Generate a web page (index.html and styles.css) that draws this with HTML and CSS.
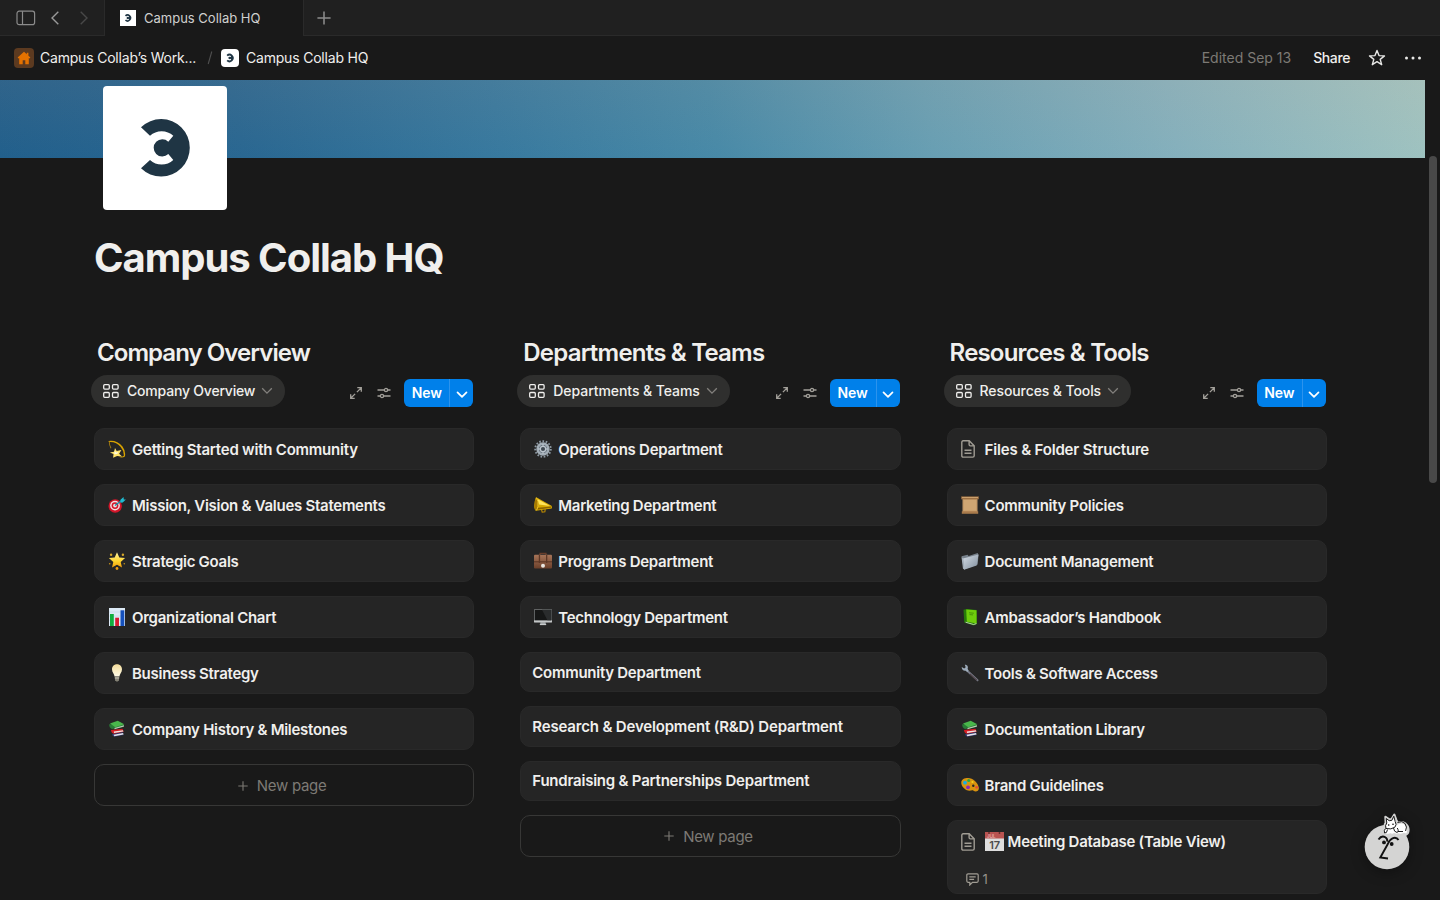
FILE: index.html
```html
<!DOCTYPE html>
<html lang="en">
<head>
<meta charset="utf-8">
<title>Campus Collab HQ</title>
<link rel="stylesheet" href="styles.css">
</head>
<body>
<svg class="defs" width="0" height="0">
  <defs>
    <linearGradient id="gold" x1="0" y1="0" x2="0" y2="1"><stop offset="0" stop-color="#fff3a0"/><stop offset=".6" stop-color="#fdd22a"/><stop offset="1" stop-color="#f09a0c"/></linearGradient>
    <linearGradient id="leather" x1="0" y1="0" x2="0" y2="1"><stop offset="0" stop-color="#a87558"/><stop offset="1" stop-color="#6b3f2a"/></linearGradient>
    <linearGradient id="steel" x1="0" y1="0" x2="1" y2="1"><stop offset="0" stop-color="#d5dde6"/><stop offset="1" stop-color="#7f8d9c"/></linearGradient>
    <linearGradient id="bulb" x1="0" y1="0" x2="0" y2="1"><stop offset="0" stop-color="#f3dc9a"/><stop offset="1" stop-color="#fffbe8"/></linearGradient>
  </defs>
  <symbol id="logo" viewBox="0 0 124 124"><path fill="#1f3544" d="M38 41.3A28.7 28.7 0 1 1 38 82.3L47 74A17.3 17.3 0 0 0 70.3 74L65.3 68A8.6 8.6 0 1 1 65.3 55.7L70.3 49.7A17.3 17.3 0 0 0 47 49.7Z"/></symbol>
  <symbol id="gallery" viewBox="0 0 16 14"><g fill="none" stroke="currentColor" stroke-width="1.3"><rect x=".7" y=".7" width="5.6" height="4.4" rx="1"/><rect x="9.5" y=".7" width="5.6" height="4.4" rx="1"/><rect x=".7" y="8.5" width="5.6" height="4.8" rx="1"/><rect x="9.5" y="8.5" width="5.6" height="4.8" rx="1"/></g></symbol>
  <symbol id="chev" viewBox="0 0 12 8"><path d="M1.200 1.300L6 6.100l4.800-4.800" fill="none" stroke="currentColor" stroke-width="1.300"/></symbol>
  <symbol id="chevb" viewBox="0 0 12 8"><path d="M1.500 1.300L6 5.800l4.500-4.500" fill="none" stroke="currentColor" stroke-width="1.700" stroke-linecap="round" stroke-linejoin="round"/></symbol>
  <symbol id="expand" viewBox="0 0 12 12"><path d="M7.300.7h4v4M11.300.7L6.900 5.100M4.700 11.300h-4v-4M.7 11.300l4.400-4.400" fill="none" stroke="currentColor" stroke-width="1.300"/></symbol>
  <symbol id="sliders" viewBox="0 0 14 12"><g fill="none" stroke="currentColor" stroke-width="1.300"><path d="M.5 3h6.700M10.800 3h2.700M.5 9h2.700M6.800 9h6.700"/><circle cx="9" cy="3" r="1.600"/><circle cx="5" cy="9" r="1.600"/></g></symbol>
  <symbol id="plus" viewBox="0 0 10 10"><path d="M5 .3v9.400M.3 5h9.400" stroke="currentColor" stroke-width="1.100"/></symbol>
  <symbol id="page" viewBox="0 0 18 18"><path d="M2.200.8h6l5 5v9.900q0 1.400-1.400 1.400H2.200Q.8 17.100.8 15.700V2.200Q.8.800 2.200.8ZM8.100.8v3.800q0 1.300 1.300 1.300h3.700M3.500 10.200h7M3.500 13.200h7" fill="none" stroke="#a09c93" stroke-width="1.400"/></symbol>
  <symbol id="dizzy" viewBox="0 0 18 18"><path d="M.6.9Q9-.2 14.500 6.500q3.500 4.700 2.400 10.100-2.700 1.600-6.400.2 4.700.2 5.300-1 .4-4.600-3.300-9Q8.200 1.300.8 2Z" fill="#d9a300"/><path d="M.8 1.200Q.8 5 2.600 8.400L3.400 8Q1.600 4.500 1.700 1.400Z" fill="#a87f10"/><path d="M7 8l1.700 3 4.700-1-2.300 3.800 3 2.700-5-.6-4 1.800.4-3.600-3.600-1.500 4.200-.8Z" fill="#ffe36a"/><path d="M6.800 10.500l1.200 1.900 2.400-.3-1.200 1.900-3 .3Z" fill="#fffce0"/></symbol>
  <symbol id="target" viewBox="0 0 18 18"><circle cx="7.200" cy="10" r="6.700" fill="#d3162a"/><circle cx="7" cy="9.600" r="4.900" fill="#f2dfe0"/><circle cx="7" cy="9.600" r="3.400" fill="#d3162a"/><circle cx="7" cy="9.600" r="1.900" fill="#f4dcdc"/><path d="M7 9.500l6.500-5" stroke="#168fa8" stroke-width="1.500"/><path d="M12.500 3.700L15.500 1l.3 2.600 2.100-.2-3.200 3.200-2.200.1Z" fill="#21bad0"/></symbol>
  <symbol id="star" viewBox="0 0 18 18"><path d="M9 .3l2.300 5.200 5.800.6-4.400 3.900 1.300 5.600L9 12.700l-5 2.900L5.300 10 .9 6.100l5.800-.6Z" fill="url(#gold)"/><circle cx="3.100" cy="2.700" r="1.200" fill="#d7a72a"/><circle cx="14.900" cy="2.700" r="1.200" fill="#d7a72a"/><circle cx="9" cy="16.500" r="1.400" fill="#ee9b10"/><circle cx="1.700" cy="11.800" r=".8" fill="#c7901b"/><circle cx="16.300" cy="11.800" r=".8" fill="#c7901b"/></symbol>
  <symbol id="chart" viewBox="0 0 18 18"><path d="M1 0h16v18H1Z" fill="#dce9f5"/><path d="M1 4h16M1 8h16M1 12h16" stroke="#bdd0e3" stroke-width=".5"/><path d="M2 6h3.800v12H2Z" fill="#10ad3e"/><path d="M7.200 9.700H11V18H7.200Z" fill="#d71a31"/><path d="M12.500 2.300h3.800V18h-3.800Z" fill="#1550bd"/></symbol>
  <symbol id="lamp" viewBox="0 0 18 18"><path d="M9 .2c3.100 0 5 2.300 5 5 0 3.300-2.300 4.400-2.600 7.300H6.600C6.300 9.600 4 8.500 4 5.200c0-2.700 1.900-5 5-5Z" fill="url(#bulb)"/><path d="M6.600 12.500h4.800l-.5 3.700-1.200 1.300H8.300l-1.200-1.300Z" fill="#858276"/><path d="M6.900 14h4.200" stroke="#c8c4b5"/></symbol>
  <symbol id="books" viewBox="0 0 18 18"><path d="M4 14l10.500-2 1.200 3-9.400 1.700Q4 16 4 14Z" fill="#30366f"/><path d="M5.600 14.700l9.500-1.700.4 1.500-9.200 1.700Z" fill="#e4e2e8"/><path d="M3 10l11.500-1.200 1.200 3L6 13.700Q3 13 3 10Z" fill="#d51d24"/><path d="M5.800 11.500l9.200-1.200.3 1.200-9.200 1.400Z" fill="#eee5e1"/><path d="M1.200 4.200Q1 7.700 4 9l11.500-2V4.500Z" fill="#287b35"/><path d="M2 3.600L9.700.8l6.600 3.500-9 3Z" fill="#49b64b"/><path d="M6.500 8l9.500-2.700v1.200L6.500 9.300Z" fill="#b9ccb5"/></symbol>
  <symbol id="gear" viewBox="0 0 18 18"><circle cx="9" cy="9" r="7.800" fill="none" stroke="#8d99a3" stroke-width="1.900" stroke-dasharray="1.650 1.620"/><circle cx="9" cy="9" r="5.500" fill="#66727d" stroke="#a3aeb7" stroke-width="2.400"/><circle cx="9" cy="9" r="2.700" fill="#3f4952" stroke="#bac4cc" stroke-width="1.300"/><path d="M9 4v2.400M4 9h2.400M11.600 9H14M9 11.600V14" stroke="#c5ced5"/></symbol>
  <symbol id="horn" viewBox="0 0 18 18"><path d="M7.500 13.500l.7 2.600 2.700-.4.300-2.600" fill="none" stroke="#bd8b00" stroke-width="1.100"/><path d="M2.300 1.300L17.500 9.700q.8 1.400.2 2.900L2 14.800Q-.5 13 .5 7.400 1 2 2.300 1.300Z" fill="#d7a900"/><path d="M3.500 3L16 10 5 8.500Z" fill="#ffe45a"/><path d="M3.300 13.800L17 11.700l.3-1.200L4 11.800Z" fill="#8c6400"/><path d="M2.300 1.500Q5 5 4 10.500 3.500 13.500 2 14.600-.3 13 .7 7.200 1.200 2.500 2.300 1.500Z" fill="#a87b00"/><path d="M2.300 1.700Q4.800 5 3.900 10.500 3.400 13.300 2.100 14.500" fill="none" stroke="#f6cf35" stroke-width=".8"/></symbol>
  <symbol id="case" viewBox="0 0 18 18"><path d="M6 3.500V1.400h6v2.100" fill="none" stroke="#693e2b" stroke-width="1.200"/><rect y="2.800" width="18" height="13.700" rx="1" fill="url(#leather)"/><path d="M0 9.800h18" stroke="#4c2919" stroke-width=".8"/><path d="M4.800 3h1.300v8H4.800ZM12 3h1.300v8H12Z" fill="#5d3826"/><circle cx="9" cy="13.700" r="2" fill="#e8e5df"/></symbol>
  <symbol id="screen" viewBox="0 0 18 18"><path d="M6.700 13h4.600l.7 3.700H6Z" fill="#a5a9ab"/><rect y="1.200" width="18" height="13.200" rx=".7" fill="#8f9293"/><path d="M0 12.300h18v2H0Z" fill="#c3c6c7"/><path d="M.6 1.800h16.800v10.500H.6Z" fill="#161717"/><path d="M8 1.800h9.400v10.500h-4Z" fill="#2a2c2d"/><path d="M5.800 16.200h6.400v.9H5.800Z" fill="#dadddd"/></symbol>
  <symbol id="scroll" viewBox="0 0 18 18"><path d="M1.500 1h15v16h-15Z" fill="#c59a68"/><path d="M.2.400h17.600v2.900H.2Z" fill="#9c6f42"/><path d="M1 1h16v.9H1Z" fill="#d0a673"/><path d="M.8 15.300h16.400v2.500H.8Z" fill="#a87a4b"/><path d="M3 4h12v10.500H3Z" fill="#cfa673"/></symbol>
  <symbol id="folder" viewBox="0 0 18 18"><path d="M.5 4.200l6-1.500 1.200 1.200 9-3 .8 2-.8 9.700L3 17.500Z" fill="#77818b"/><path d="M2 6.500l15.500-4-1.800 11L3 17.700Z" fill="url(#steel)"/><path d="M.5 5.200l1.700 1 1 11-1.200-.5Z" fill="#a5b0bb"/></symbol>
  <symbol id="book" viewBox="0 0 18 18"><path d="M2.500 1.800L6 .9l9.700 1.200.3 14-3.300 1.500-9.400-3.200Z" fill="#267a09"/><path d="M5.200 1.500L15.500 2.300l.1 13.200-9.800-1.800Z" fill="#6fce0c"/><path d="M4.600 14.200l8 2.300 2.800-.9" stroke="#dce8cf" stroke-width=".8" fill="none"/><path d="M8 4.800l4.800.4M8.500 6.600l3.500.3" stroke="#448f06" stroke-width=".9"/></symbol>
  <symbol id="wrench" viewBox="0 0 18 18"><path d="M6.500 7l10 9.300" stroke="#777b88" stroke-width="2" stroke-linecap="round"/><path d="M9 9.800l7 6.500" stroke="#4d3d42" stroke-width="1.100"/><path d="M.7 3.100l2.500 1.400 1.500-1.300L3.800.7C6.500.5 7.500 3 6.600 4.800l1 2-1.300 1.300-1.700-1.300C2.500 7.200.6 5.500.7 3.100Z" fill="#9dabba"/></symbol>
  <symbol id="palette" viewBox="0 0 18 18"><path d="M7 2c5 0 10 5 10.800 9.500.6 4-3.500 4.700-5.200 3.300-1.700-1.400-3 .6-5.300-.2C3.200 13.500 0 9.700.3 6.200.5 3.500 3.300 2 7 2Z" fill="#d9930f"/><circle cx="4" cy="6.700" r="1.900" fill="#18aee0"/><circle cx="7.700" cy="4.500" r="1.500" fill="#24ad42"/><circle cx="11.500" cy="6" r="1.100" fill="#f1d51e"/><circle cx="7" cy="11.300" r="1.900" fill="#8d27b6"/><circle cx="15.700" cy="11.300" r="1.400" fill="#e54d38"/><circle cx="12.300" cy="9.700" r="1.200" fill="#252525"/></symbol>
</svg>

<div class="tabbar">
  <div class="nav">
    <svg width="20" height="16" viewBox="0 0 20 16" fill="none" stroke="#8b8b8b" stroke-width="1.200"><rect x="1" y="1.200" width="17.600" height="13.400" rx="2.200"/><path d="M6.500 1.200v13.400"/></svg>
    <svg class="back" width="10" height="16" viewBox="0 0 10 16" fill="none" stroke="#999" stroke-width="1.400"><path d="M8.300 1.700L2 8l6.300 6.300"/></svg>
    <svg class="fwd" width="10" height="16" viewBox="0 0 10 16" fill="none" stroke="#484848" stroke-width="1.400"><path d="M1.700 1.700L8 8l-6.300 6.300"/></svg>
  </div>
  <div class="tab"><svg class="tab-logo" viewBox="0 0 124 124"><use href="#logo" width="124" height="124"/></svg><span>Campus Collab HQ</span></div>
  <div class="addtab"><svg width="14" height="14"><use href="#plus"/></svg></div>
</div>

<div class="topbar">
  <span class="home"><svg width="14" height="14" viewBox="0 0 14 14" fill="#e57200"><path d="M7 .8L.6 6.600l.9.9.7-.5v6.200h3.500V9.200h2.600v4h3.500V7l.7.500.9-.9-2-1.800V1.700h-1.600v1.600Z"/></svg></span>
  <span class="crumb ws">Campus Collab’s Work...</span>
  <svg class="slash" width="6" height="16" viewBox="0 0 6 16"><path d="M4.800 1.500L1.200 14" stroke="#505050" stroke-width="1.100"/></svg>
  <svg class="crumb-logo" viewBox="0 0 124 124"><use href="#logo" width="124" height="124"/></svg>
  <span class="crumb">Campus Collab HQ</span>
  <span class="edited">Edited Sep 13</span>
  <span class="share">Share</span>
  <svg class="fav" width="18" height="18" viewBox="0 0 18 18"><path d="M9 1.500l2 5.100 5.500.3-4.300 3.500 1.500 5.300L9 12.700l-4.700 3 1.500-5.300L1.500 6.900 7 6.600Z" fill="none" stroke="#e8e8e6" stroke-width="1.400" stroke-linejoin="round"/></svg>
  <svg class="more" width="18" height="6" viewBox="0 0 18 6" fill="#e8e8e6"><circle cx="2.500" cy="3" r="1.500"/><circle cx="9" cy="3" r="1.500"/><circle cx="15.500" cy="3" r="1.500"/></svg>
</div>

<main class="page">
  <div class="cover"></div>
  <svg class="page-icon" viewBox="0 0 124 124"><use href="#logo"/></svg>
  <h1>Campus Collab HQ</h1>
  <div class="columns">
    <section class="col">
      <h2 class="h-a">Company Overview</h2>
      <div class="bar">
        <div class="pill"><svg width="16" height="14"><use href="#gallery"/></svg><span class="p-a">Company Overview</span><svg class="pc" width="12" height="8"><use href="#chev"/></svg></div>
        <svg class="tool" width="12" height="12"><use href="#expand"/></svg><svg class="tool" width="14" height="12"><use href="#sliders"/></svg>
        <div class="new"><span>New</span><i><svg width="12" height="8"><use href="#chevb"/></svg></i></div>
      </div>
      <div class="cards">
        <div class="card"><svg><use href="#dizzy"/></svg><span class="loose">Getting Started with Community</span></div>
        <div class="card"><svg><use href="#target"/></svg><span>Mission, Vision &amp; Values Statements</span></div>
        <div class="card"><svg><use href="#star"/></svg><span>Strategic Goals</span></div>
        <div class="card"><svg><use href="#chart"/></svg><span>Organizational Chart</span></div>
        <div class="card"><svg><use href="#lamp"/></svg><span>Business Strategy</span></div>
        <div class="card"><svg><use href="#books"/></svg><span>Company History &amp; Milestones</span></div>
        <div class="newpage"><svg width="10" height="10"><use href="#plus"/></svg><span>New page</span></div>
      </div>
    </section>
    <section class="col">
      <h2 class="h-b">Departments &amp; Teams</h2>
      <div class="bar">
        <div class="pill"><svg width="16" height="14"><use href="#gallery"/></svg><span class="p-b">Departments &amp; Teams</span><svg class="pc" width="12" height="8"><use href="#chev"/></svg></div>
        <svg class="tool" width="12" height="12"><use href="#expand"/></svg><svg class="tool" width="14" height="12"><use href="#sliders"/></svg>
        <div class="new mid"><span>New</span><i><svg width="12" height="8"><use href="#chevb"/></svg></i></div>
      </div>
      <div class="cards">
        <div class="card"><svg><use href="#gear"/></svg><span>Operations Department</span></div>
        <div class="card"><svg><use href="#horn"/></svg><span>Marketing Department</span></div>
        <div class="card"><svg><use href="#case"/></svg><span>Programs Department</span></div>
        <div class="card"><svg><use href="#screen"/></svg><span>Technology Department</span></div>
        <div class="card plain"><span>Community Department</span></div>
        <div class="card plain"><span class="looser">Research &amp; Development (R&amp;D) Department</span></div>
        <div class="card plain"><span class="loose">Fundraising &amp; Partnerships Department</span></div>
        <div class="newpage"><svg width="10" height="10"><use href="#plus"/></svg><span>New page</span></div>
      </div>
    </section>
    <section class="col">
      <h2 class="h-c">Resources &amp; Tools</h2>
      <div class="bar">
        <div class="pill"><svg width="16" height="14"><use href="#gallery"/></svg><span class="p-c">Resources &amp; Tools</span><svg class="pc" width="12" height="8"><use href="#chev"/></svg></div>
        <svg class="tool" width="12" height="12"><use href="#expand"/></svg><svg class="tool" width="14" height="12"><use href="#sliders"/></svg>
        <div class="new"><span>New</span><i><svg width="12" height="8"><use href="#chevb"/></svg></i></div>
      </div>
      <div class="cards">
        <div class="card"><svg><use href="#page"/></svg><span class="looser">Files &amp; Folder Structure</span></div>
        <div class="card"><svg><use href="#scroll"/></svg><span>Community Policies</span></div>
        <div class="card"><svg><use href="#folder"/></svg><span>Document Management</span></div>
        <div class="card"><svg><use href="#book"/></svg><span>Ambassador’s Handbook</span></div>
        <div class="card"><svg><use href="#wrench"/></svg><span>Tools &amp; Software Access</span></div>
        <div class="card"><svg><use href="#books"/></svg><span>Documentation Library</span></div>
        <div class="card"><svg><use href="#palette"/></svg><span>Brand Guidelines</span></div>
        <div class="card tall">
          <div class="row"><svg><use href="#page"/></svg><svg class="cal" viewBox="0 0 19 19"><path d="M0 0h19v19H0Z" fill="#dedede"/><path d="M0 0h19v6.500H0Z" fill="#b95451"/><path d="M4 0v2M14.500 0v2" stroke="#6d302e" stroke-width="1.500"/><text x="1.800" y="5.700" class="cal-m">JUL</text><text x="9.500" y="16.700" class="cal-d">17</text></svg><span>Meeting Database (Table View)</span></div>
          <div class="comments"><svg width="13" height="13" viewBox="0 0 13 13" fill="none" stroke="#a09c93" stroke-width="1.200"><path d="M2 .9h9q1.200 0 1.200 1.200v6q0 1.200-1.200 1.200H6.500L3.800 12V9.300H2Q.8 9.300.8 8.100v-6Q.8.900 2 .9ZM3.300 3.900h6.400M3.300 6.300h4.800"/></svg><span>1</span></div>
        </div>
      </div>
    </section>
  </div>
  <div class="thumb"></div>
  <svg class="assistant" width="60" height="64" viewBox="0 0 60 64">
    <circle cx="30" cy="37" r="22.300" fill="#d4d4d3"/>
    <path d="M29 24.500q-3.500.8-3-3 .3-2 2-3-.8-4 .8-5.500l-.3-6 3.700 2.500 2.500-.3 2.600-4.400 2 5.400q1 1.500.9 3.300 4.500-2.500 8.300.3 4.200 3.600 2.300 9.200-1.500 2.500-3.800 1-3 1.500-6.200.5-2 .8-3.600-.2-1.600 1-3.400.2-2.500.9-4.800 0Z" fill="#fff" stroke="#d4d4d3" stroke-width="2.400" stroke-linejoin="round"/>
    <path d="M29 18.500q-1.300-3 .8-5.500l-.6-4.500 3 2.200 2.600-.3 2-4.200 1.400 5.400q2 3.200-.3 5.600-3.700 2.700-8.900 1.300ZM40.500 12.500q4.700-2.300 7.500 1 2.600 3.500.6 7.500M28.500 18.500q-1.800 1.500-1 4.500 2.500.5 3-3.500M36.500 18q.5 4 3.500 4.500 2.300-1 .3-4.500M41 21.500h5" fill="none" stroke="#1b1b1b" stroke-width="1"/>
    <circle cx="31.700" cy="15" r=".8"/><circle cx="36" cy="14.300" r=".8"/>
    <path d="M21.500 29.500q3-4.500 6.800-2.300 2.400 1.400 1.900 4.500M41.500 30q-2-3.200-6-1.700-2.800 1.200-4.700 5.700l-7.500 13.500 7.700 1" fill="none" stroke="#111" stroke-width="1.900"/>
    <circle cx="27" cy="32.400" r="1.900" fill="#111"/><circle cx="34.700" cy="34" r="1.900" fill="#111"/>
  </svg>
</main>
</body>
</html>
```
FILE: styles.css
```css
* { box-sizing: border-box; }
body { margin: 0; width: 1440px; height: 900px; overflow: hidden; display: flex; flex-direction: column; background: #191919; color: #f0efed; font-family: Inter, "Liberation Sans", sans-serif; }
svg { display: block; flex: none; }
.defs { position: absolute; }
.tabbar { height: 36px; flex: none; display: flex; background: #202020; }
.nav { width: 105px; display: flex; align-items: center; padding-left: 16px; border-right: 1px solid #2a2a2a; border-bottom: 1px solid #2a2a2a; }
.back { margin-left: 14px; }
.fwd { margin-left: 19px; }
.tab { width: 198px; display: flex; align-items: center; gap: 8px; padding-left: 15px; background: #191919; font-size: 13px; color: #d0d0ce; }
.tab-logo { width: 16px; height: 16px; background: #fff; }
.addtab { flex: 1; padding: 11px 0 0 13px; border-left: 1px solid #2a2a2a; border-bottom: 1px solid #2a2a2a; color: #8c8c8c; }
.topbar { height: 44px; flex: none; display: flex; align-items: center; padding-left: 14px; font-size: 14px; }
.home { width: 20px; height: 20px; margin-right: 6px; border-radius: 4px; background: #5c3a20; display: grid; place-items: center; }
.crumb { letter-spacing: -0.2px; padding-bottom: 2px; }
.ws { width: 157px; white-space: nowrap; }
.slash { margin: 0 8px 0 10px; }
.crumb-logo { width: 18px; height: 18px; border-radius: 4px; background: #fff; margin-right: 7px; }
.edited { margin-left: auto; padding-bottom: 2px; color: #7d7a75; }
.share { margin-left: 22px; padding-bottom: 2px; font-weight: 500; letter-spacing: -0.4px; }
.fav { margin-left: 18px; }
.more { margin: 0 18px 0 18px; }
.page { position: relative; flex: 1; overflow: hidden; }
.cover { width: 1425px; height: 78px; background: linear-gradient(to bottom, rgba(160,140,130,.10), rgba(0,110,160,.04)), linear-gradient(80deg, #235f8b 0%, #2b6791 17%, #3a7a9f 35%, #4b8ba8 50%, #6ca1b4 65%, #8ab3be 82%, #a6c7c2 100%); }
.page-icon { width: 124px; height: 124px; margin: -72px 0 0 103px; position: relative; background: #fff; border-radius: 4px; }
h1 { margin: 24px 0 0 94px; font-size: 40px; line-height: 48px; font-weight: 700; letter-spacing: -1.03px; }
.columns { margin: 56px 0 0 94px; display: grid; grid-template-columns: repeat(3, 380.300px); gap: 46px; }
h2 { margin: 0 0 0 3px; font-size: 24px; line-height: 30px; font-weight: 600; white-space: nowrap; }
.h-a { letter-spacing: -0.94px; }
.h-b { letter-spacing: -0.78px; }
.h-c { letter-spacing: -0.82px; }
.bar { height: 38px; margin-top: 6px; display: flex; align-items: center; }
.pill { height: 32px; margin: -5px auto 0 -3px; padding: 0 12px; border-radius: 16px; background: #2f2f2e; display: flex; align-items: center; font-size: 14px; font-weight: 500; }
.pill span { margin: 0 6px 0 8px; white-space: nowrap; }
.p-a { letter-spacing: -0.2px; }
.p-b { letter-spacing: -0.06px; }
.p-c { letter-spacing: -0.1px; }
.pc { color: #83817d; }
.tool { margin-right: 15px; color: #a3a09a; }
.tool + .tool { margin-right: 13px; }
.new { width: 69px; height: 28px; margin-right: 1px; border-radius: 6px; background: #0080ea; color: #fff; display: flex; align-items: center; font-size: 14px; font-weight: 600; }
.mid { width: 70px; }
.new span { width: 45px; padding-bottom: 2px; text-align: center; letter-spacing: -0.1px; }
.mid span { width: 46px; }
.new i { flex: 1; height: 28px; border-left: 1px solid #2c93ed; display: grid; place-items: center; padding-top: 3px; }
.cards { margin-top: 16px; display: flex; flex-direction: column; gap: 14px; font-size: 15px; font-weight: 600; letter-spacing: -0.27px; }
.card, .newpage { height: 42px; border-radius: 10px; display: flex; align-items: center; white-space: nowrap; }
.card { background: #252525; border: 1px solid #292929; padding: 0 13px 0 13px; }
.card > svg, .row > svg { width: 18px; height: 18px; margin-right: 6px; }
.card > svg { margin-top: -1px; }
.loose { letter-spacing: -0.22px; }
.looser { letter-spacing: -0.17px; }
.plain { height: 40.330px; padding-left: 11px; }
.newpage { border: 1px solid #373736; justify-content: center; gap: 9px; padding: 1px 4px 0 0; color: #7d7a75; font-weight: 400; letter-spacing: -0.3px; }
.tall { height: 74px; display: block; padding: 0 13px; }
.row { height: 41px; display: flex; align-items: center; }
.row > .cal { width: 19px; height: 19px; margin-right: 4px; }
.cal-m { font-size: 5px; fill: #e3a3a0; font-family: Inter, sans-serif; }
.cal-d { font-size: 11px; font-weight: 600; fill: #4c4c4c; text-anchor: middle; font-family: Inter, sans-serif; }
.comments { margin: 10px 0 0 5px; display: flex; align-items: center; gap: 4px; font-size: 13px; font-weight: 400; line-height: 14px; color: #94918b; }
.thumb { position: absolute; left: 1429px; top: 76px; width: 8px; height: 327px; border-radius: 4px; background: #494949; }
.assistant { position: absolute; left: 1357px; top: 730px; filter: drop-shadow(0 3px 7px rgba(0,0,0,.35)); }
```
